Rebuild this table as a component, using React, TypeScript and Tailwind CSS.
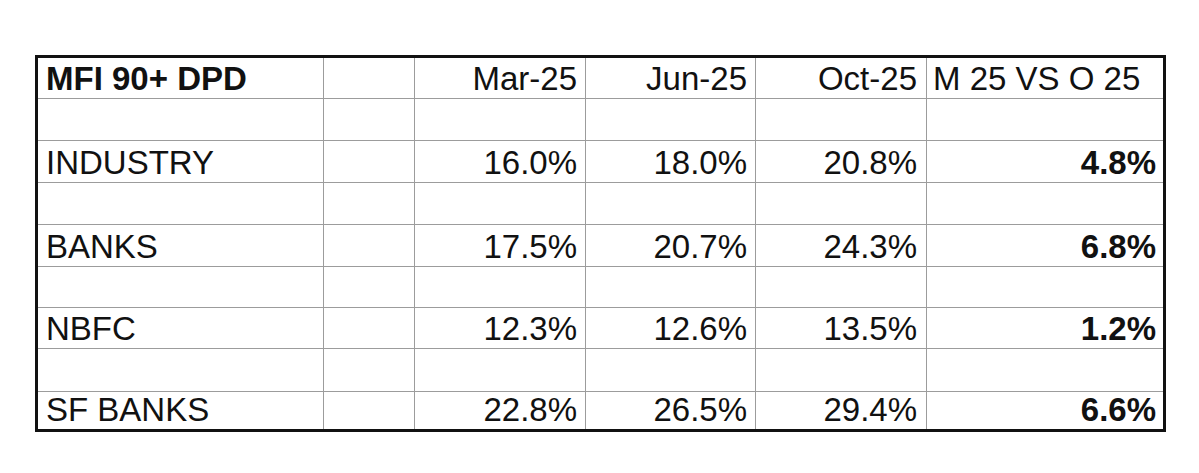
import React from 'react';

type Row = { label: string; mar: string; jun: string; oct: string; diff: string };

const rows: Row[] = [
  { label: 'INDUSTRY', mar: '16.0%', jun: '18.0%', oct: '20.8%', diff: '4.8%' },
  { label: 'BANKS', mar: '17.5%', jun: '20.7%', oct: '24.3%', diff: '6.8%' },
  { label: 'NBFC', mar: '12.3%', jun: '12.6%', oct: '13.5%', diff: '1.2%' },
  { label: 'SF BANKS', mar: '22.8%', jun: '26.5%', oct: '29.4%', diff: '6.6%' },
];

const cell = 'bg-white flex items-end pb-[3px] leading-none whitespace-nowrap overflow-hidden';

function EmptyRow() {
  return (
    <>
      <div className={cell} />
      <div className={cell} />
      <div className={cell} />
      <div className={cell} />
      <div className={cell} />
      <div className={cell} />
    </>
  );
}

export default function App() {
  return (
    <div className="min-h-screen w-full bg-white pt-[55px] pl-[35px] font-['Liberation_Sans',Arial,sans-serif] text-[33px] text-[#111]">
      <div className="w-[1131px] border-[3px] border-[#111] bg-[#9c9c9c] grid gap-px grid-cols-[285px_90px_170px_169px_170px_236px] grid-rows-[40px_41px_41px_41px_41px_40px_40px_42px_37px]">
        {/* header */}
        <div className={`${cell} pl-2 font-bold`}>MFI 90+ DPD</div>
        <div className={cell} />
        <div className={`${cell} justify-end pr-2`}>Mar-25</div>
        <div className={`${cell} justify-end pr-2`}>Jun-25</div>
        <div className={`${cell} justify-end pr-[9px]`}>Oct-25</div>
        <div className={`${cell} pl-[6px]`}>M 25 VS O 25</div>

        {rows.map((r) => (
          <React.Fragment key={r.label}>
            <EmptyRow />
            <div className={`${cell} pl-2`}>{r.label}</div>
            <div className={cell} />
            <div className={`${cell} justify-end pr-2`}>{r.mar}</div>
            <div className={`${cell} justify-end pr-2`}>{r.jun}</div>
            <div className={`${cell} justify-end pr-[9px]`}>{r.oct}</div>
            <div className={`${cell} justify-end pr-[7px] font-bold`}>{r.diff}</div>
          </React.Fragment>
        ))}
      </div>
    </div>
  );
}
